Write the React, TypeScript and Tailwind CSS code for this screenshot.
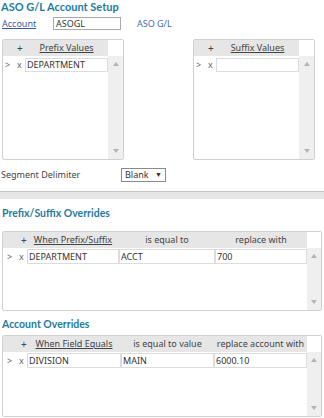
import React from 'react';

const teal = 'text-[#1f7b9e]';

function UpArrow() {
  return (
    <svg width="6" height="4" viewBox="0 0 6 4" className="block">
      <path d="M0 4 L3 0 L6 4 Z" fill="#b4b4b4" />
    </svg>
  );
}

function DownArrow() {
  return (
    <svg width="6" height="4" viewBox="0 0 6 4" className="block">
      <path d="M0 0 L6 0 L3 4 Z" fill="#b4b4b4" />
    </svg>
  );
}

function ScrollColumn() {
  return (
    <div className="w-[15px] flex flex-col">
      <div className="h-[16px] bg-white" />
      <div className="flex-1 bg-[#efefef] flex flex-col items-center justify-between pt-[6px] pb-[6px]">
        <UpArrow />
        <DownArrow />
      </div>
    </div>
  );
}

interface ListPanelProps {
  title: string;
  value: string;
}

function ListPanel({ title, value }: ListPanelProps) {
  return (
    <div className="w-[122px] h-[121px] border border-[#d0d0d0] rounded-[2px] flex overflow-hidden">
      <div className="flex-1 flex flex-col">
        <div className="h-[16px] bg-[#e6e6e6] flex items-center text-[#444]">
          <span className="w-[14px]" />
          <span className="w-[8px] text-[10px] leading-none">+</span>
          <span className="flex-1 text-center underline">{title}</span>
        </div>
        <div className="h-[15px] mt-[1px] flex items-center text-[#666]">
          <span className="w-[14px] pl-[2px]">&gt;</span>
          <span className="w-[8px]">x</span>
          <div className="flex-1 h-[14px] border border-[#dcdcdc] bg-white pl-[1px] leading-[12px] text-[#333]">
            {value}
          </div>
        </div>
      </div>
      <ScrollColumn />
    </div>
  );
}

interface GridTableProps {
  headers: string[];
  values: string[];
  widths: string[];
  height: string;
}

function GridTable({ headers, values, widths, height }: GridTableProps) {
  return (
    <div className={`ml-[2px] w-[320px] ${height} border border-[#d0d0d0] rounded-[2px] flex overflow-hidden`}>
      <div className="flex-1 flex flex-col">
        <div className="h-[16px] bg-[#e6e6e6] flex items-center text-[#444]">
          <span className="w-[16px]" />
          <span className="w-[8px] text-[10px] leading-none pl-[2px]">+</span>
          {headers.map((h, i) => (
            <span key={h} className={`${widths[i]} text-center ${i === 0 ? 'underline' : ''}`}>
              {h}
            </span>
          ))}
        </div>
        <div className="h-[15px] mt-[1px] flex items-center text-[#666]">
          <span className="w-[16px] pl-[4px]">&gt;</span>
          <span className="w-[8px]">x</span>
          {values.map((v, i) => (
            <div
              key={i}
              className={`${widths[i]} h-[15px] border border-[#dcdcdc] bg-white pl-[1px] leading-[13px] text-[#333]`}
            >
              {v}
            </div>
          ))}
        </div>
      </div>
      <ScrollColumn />
    </div>
  );
}

export default function App() {
  return (
    <div className="w-[324px] h-[418px] overflow-hidden bg-white font-['Noto_Sans',sans-serif] text-[9px] text-[#333]">
      <h1 className={`h-[14px] leading-[14px] pl-[1px] font-['Lato',sans-serif] text-[11px] font-bold ${teal}`}>
        ASO G/L Account Setup
      </h1>

      <div className="mt-[3px] h-[13px] flex items-center">
        <span className="w-[53px] pl-[2px] underline text-[#3a5a9c]">Account</span>
        <div className="w-[68px] h-[13px] border border-[#a9a9a9] pl-[2px] leading-[11px] text-[#333]">ASOGL</div>
        <span className="ml-[16px] text-[#3d6db5]">ASO G/L</span>
      </div>

      <div className="mt-[9px] flex pl-[2px] gap-[69px]">
        <ListPanel title="Prefix Values" value="DEPARTMENT" />
        <ListPanel title="Suffix Values" value="" />
      </div>

      <div className="mt-[8px] h-[14px] flex items-center">
        <span className="w-[121px] pl-[1px] text-[#444]">Segment Delimiter</span>
        <div className="w-[45px] h-[14px] border border-[#8a8a8a] flex items-center justify-between px-[3px] text-[#333]">
          <span>Blank</span>
          <span className="text-[7px]">▼</span>
        </div>
      </div>

      <div className="mt-[9px] h-[8px] bg-[#e6e6e6] border-t border-[#c4c4c4]" />

      <h2 className={`mt-[7px] h-[14px] leading-[14px] pl-[2px] font-['Lato',sans-serif] text-[10.5px] font-bold ${teal}`}>
        Prefix/Suffix Overrides
      </h2>

      <div className="mt-[11px]">
        <GridTable
          headers={['When Prefix/Suffix', 'is equal to', 'replace with']}
          values={['DEPARTMENT', 'ACCT', '700']}
          widths={['w-[92px]', 'w-[96px]', 'w-[92px]']}
          height="h-[80px]"
        />
      </div>

      <h2 className={`mt-[6px] h-[14px] leading-[14px] pl-[2px] font-['Lato',sans-serif] text-[10.5px] font-bold ${teal}`}>
        Account Overrides
      </h2>

      <div className="mt-[4px]">
        <GridTable
          headers={['When Field Equals', 'is equal to value', 'replace account with']}
          values={['DIVISION', 'MAIN', '6000.10']}
          widths={['w-[94px]', 'w-[93px]', 'w-[93px]']}
          height="h-[82px]"
        />
      </div>
    </div>
  );
}
